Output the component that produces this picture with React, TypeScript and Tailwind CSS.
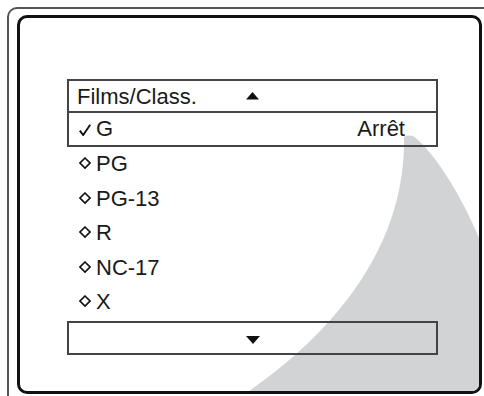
import React from "react";

const ratings = ["PG", "PG-13", "R", "NC-17", "X"];

function Check() {
  return (
    <svg width="12" height="12" viewBox="0 0 12 12" className="inline-block align-baseline">
      <path d="M0.8 6.6 L4.2 11 L11.2 0.8" fill="none" stroke="#111" strokeWidth="1.9" />
    </svg>
  );
}

function Diamond() {
  return (
    <svg width="12" height="14" viewBox="0 0 12 14" className="inline-block align-baseline">
      <path d="M6 1 L11 6 L6 11 L1 6 Z" fill="none" stroke="#111" strokeWidth="1.6" />
    </svg>
  );
}

export default function App() {
  return (
    <div className="w-[484px] h-[396px] overflow-hidden bg-white font-['Liberation_Sans',Arial,sans-serif] text-[#1a1a1a]">
      {/* outer frame, runs off the right and bottom edges */}
      <div className="ml-[7px] mt-[7px] w-[520px] h-[420px] border-l-2 border-t-2 border-[#555] rounded-tl-[10px] pl-[8px] pt-[6px]">
        <div className="relative w-[465px] h-[379px] border-[3px] border-[#111] rounded-[10px] overflow-hidden">
          {/* grey sweep */}
          <svg className="absolute left-0 top-0" width="459" height="373" viewBox="20 18 459 373">
            <path
              d="M404 137 C406 250 330 335 248 392 L481 392 L481 243 C466 205 440 160 418 140 Q411 133 404 137 Z"
              fill="#d2d3d5"
            />
          </svg>

          <div className="relative pl-[47px] pt-[61px] text-[22px]">
            <div className="w-[371px] border-2 border-[#444]">
              <div className="h-[32px] leading-[32px] pl-[8px] border-b-2 border-[#444]">
                <span className="inline-block w-[169px]">Films/Class.</span>
                <svg width="13" height="12" viewBox="0 0 13 12" className="inline-block align-baseline">
                  <polygon points="0,7.5 6.5,0 13,7.5" fill="#111" />
                </svg>
              </div>
              <div className="h-[32px] leading-[32px] pl-[10px] pr-[31px] flex justify-between">
                <span>
                  <Check />
                  <span className="ml-[5px]">G</span>
                </span>
                <span>Arrêt</span>
              </div>
            </div>

            {ratings.map((r) => (
              <div key={r} className="h-[34.5px] leading-[34.5px] pl-[12px]">
                <Diamond />
                <span className="ml-[5px]">{r}</span>
              </div>
            ))}

            <div className="mt-[1px] w-[371px] h-[34px] border-2 border-[#444] flex items-center pl-[177px]">
              <svg width="14" height="8" viewBox="0 0 14 8" className="mt-[5px]">
                <polygon points="0,0 14,0 7,8" fill="#111" />
              </svg>
            </div>
          </div>
        </div>
      </div>
    </div>
  );
}
